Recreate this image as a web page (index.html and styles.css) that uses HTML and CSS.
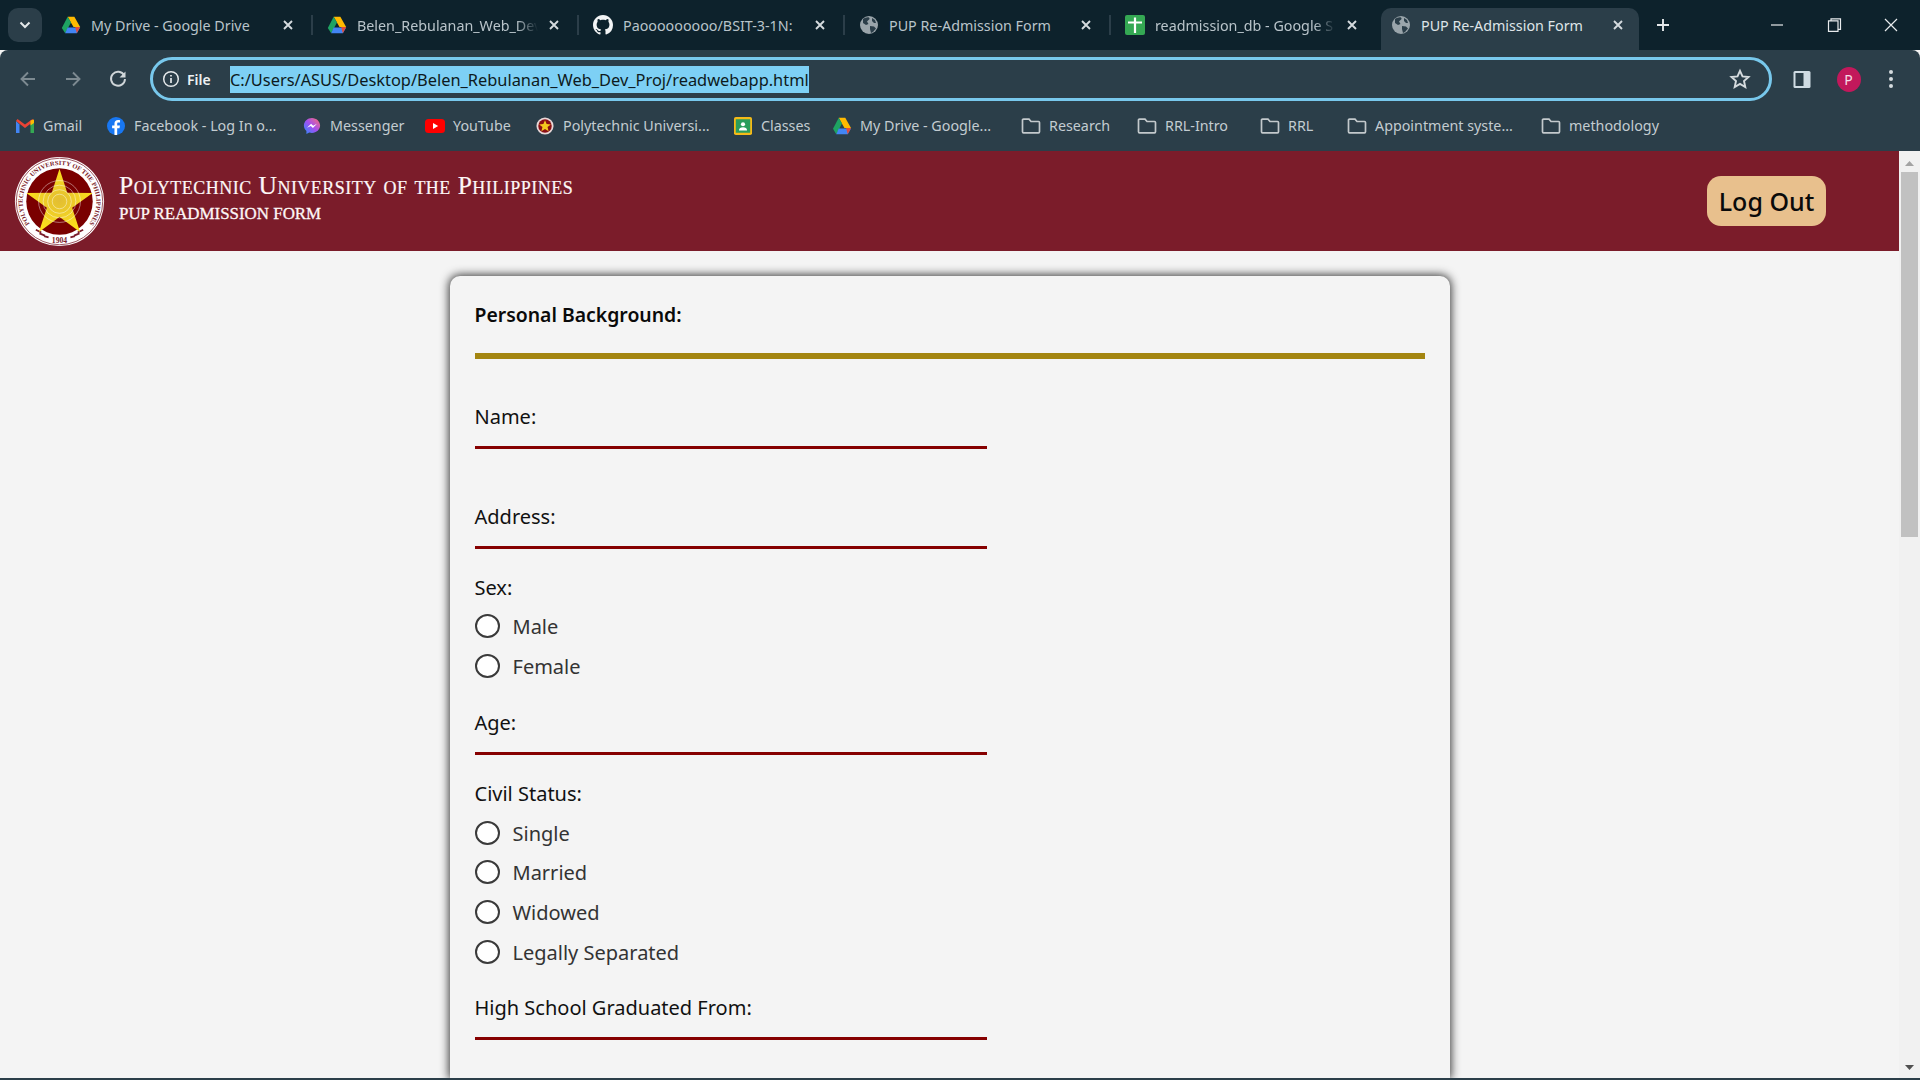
FILE: index.html
```html
<!DOCTYPE html>
<html lang="en">
<head>
<meta charset="utf-8">
<title>PUP Re-Admission Form</title>
<link rel="stylesheet" href="styles.css">
</head>
<body>
<svg class="defs" width="0" height="0" aria-hidden="true">
  <defs>
    <symbol id="drive" viewBox="0 0 24 22">
      <path d="M8 1h8l7 12.500h-8z" fill="#ffba00"/>
      <path d="M1 14.500 8 1l4 7-7 13z" fill="#1ea362"/>
      <path d="M8 14h15l-4 7H5z" fill="#4285f4"/>
      <path d="M19 21l4-7.500h-6z" fill="#e14a3b"/>
    </symbol>
    <symbol id="globe" viewBox="0 0 20 20">
      <circle cx="10" cy="10" r="9" fill="#9aa5ab"/>
      <path d="M4 4c2-1 4-2 6-1.500 1 1 .5 2-.5 2.500L8 6.500 9.500 9 7 10 4 8zM11 11l4 .5 2 2-3 3.500-2 1-1-4zM13 3l3 2 1 3-2 0-2-2z" fill="#2b3e49"/>
    </symbol>
    <symbol id="folder" viewBox="0 0 20 18">
      <path d="M1.500 3.200c0-.6.4-1 1-1h5.500l2 2.300h7.500c.6 0 1 .4 1 1v9.300c0 .6-.4 1-1 1h-15c-.6 0-1-.4-1-1z" fill="none" stroke="#c3c9cc" stroke-width="1.700"/>
    </symbol>
    <symbol id="x" viewBox="0 0 12 12">
      <path d="M2 2l8 8M10 2l-8 8" stroke="#d5dbde" stroke-width="1.900" fill="none"/>
    </symbol>
  </defs>
</svg>

<div class="tabstrip">
  <div class="tabsearch"><svg width="12" height="8" viewBox="0 0 12 8"><path d="M1.500 1.500 6 6l4.500-4.500" fill="none" stroke="#e4e8ea" stroke-width="2"/></svg></div>
  <div class="tab"><svg class="favicon"><use href="#drive"/></svg><span class="tabtitle">My Drive - Google Drive</span><svg class="tabx"><use href="#x"/></svg></div>
  <div class="tab"><svg class="favicon"><use href="#drive"/></svg><span class="tabtitle fade">Belen_Rebulanan_Web_Dev</span><svg class="tabx"><use href="#x"/></svg></div>
  <div class="tab"><svg class="favicon" viewBox="0 0 16 16"><path fill="#f2f4f5" d="M8 0C3.580 0 0 3.580 0 8c0 3.540 2.290 6.530 5.470 7.590.4.070.55-.17.55-.38 0-.19-.01-.82-.01-1.490-2.010.37-2.530-.49-2.690-.94-.09-.23-.48-.94-.82-1.130-.28-.15-.68-.52-.01-.53.63-.01 1.080.58 1.230.82.720 1.210 1.870.87 2.330.66.070-.52.280-.87.510-1.070-1.780-.2-3.640-.89-3.640-3.950 0-.87.310-1.590.820-2.150-.08-.2-.36-1.020.08-2.120 0 0 .67-.21 2.200.820.640-.18 1.320-.27 2-.27s1.360.090 2 .27c1.530-1.040 2.200-.82 2.200-.82.440 1.100.160 1.920.080 2.120.510.560.820 1.270.820 2.150 0 3.070-1.870 3.750-3.650 3.950.290.250.540.730.540 1.480 0 1.070-.01 1.930-.01 2.200 0 .21.150.46.550.38A8.010 8.010 0 0 0 16 8c0-4.420-3.580-8-8-8z"/></svg><span class="tabtitle">Paooooooooo/BSIT-3-1N:</span><svg class="tabx"><use href="#x"/></svg></div>
  <div class="tab"><svg class="favicon"><use href="#globe"/></svg><span class="tabtitle">PUP Re-Admission Form</span><svg class="tabx"><use href="#x"/></svg></div>
  <div class="tab"><svg class="favicon" viewBox="0 0 20 20"><rect width="20" height="20" rx="2" fill="#34a853"/><path d="M3 7.500h14M10 2.500v15.500" stroke="#fff" stroke-width="2.200"/></svg><span class="tabtitle fade">readmission_db - Google S</span><svg class="tabx"><use href="#x"/></svg></div>
  <div class="tab tab-active"><svg class="favicon"><use href="#globe"/></svg><span class="tabtitle">PUP Re-Admission Form</span><svg class="tabx"><use href="#x"/></svg></div>
  <svg class="newtab" width="14" height="14" viewBox="0 0 14 14"><path d="M7 1v12M1 7h12" stroke="#e4e8ea" stroke-width="1.900"/></svg>
  <div class="winctl">
    <svg class="winbtn" viewBox="0 0 56 20"><path d="M22 10h12" stroke="#e8ebed" stroke-width="1.200"/></svg>
    <svg class="winbtn" viewBox="0 0 56 20"><path d="M25 5.500V3.800h9.500v10.500h-2M22.500 5.800h9.500v10.500h-9.500z" fill="none" stroke="#e8ebed" stroke-width="1.200"/></svg>
    <svg class="winbtn" viewBox="0 0 56 20"><path d="M22 4l12 12M34 4 22 16" stroke="#e8ebed" stroke-width="1.200"/></svg>
  </div>
</div>

<div class="toolbar">
  <div class="navrow">
    <div class="navbtn"><svg width="20" height="20" viewBox="0 0 20 20"><path d="M17 10H4M10 3.500 3.500 10l6.500 6.500" fill="none" stroke="#7d8a91" stroke-width="1.900"/></svg></div>
    <div class="navbtn"><svg width="20" height="20" viewBox="0 0 20 20"><path d="M3 10h13M10 3.500l6.500 6.500-6.500 6.500" fill="none" stroke="#7d8a91" stroke-width="1.900"/></svg></div>
    <div class="navbtn"><svg width="20" height="20" viewBox="0 0 20 20"><path d="M16.200 6.500A7 7 0 1 0 17 10" fill="none" stroke="#d0d6d9" stroke-width="1.900"/><path d="M17.500 2.500v6h-6z" fill="#d0d6d9"/></svg></div>
    <div class="omnibox">
      <svg class="infoicon" width="18" height="18" viewBox="0 0 18 18"><circle cx="9" cy="9" r="7.300" fill="none" stroke="#e4e8ea" stroke-width="1.500"/><path d="M9 8v5M9 5v1.600" stroke="#e4e8ea" stroke-width="1.700"/></svg>
      <span class="filelabel">File</span>
      <span class="urltext">C:/Users/ASUS/Desktop/Belen_Rebulanan_Web_Dev_Proj/readwebapp.html</span>
      <svg class="star" width="22" height="22" viewBox="0 0 22 22"><path d="m11 2.800 2.500 5.600 6 .6-4.500 4 1.300 6L11 15.900 5.700 19l1.300-6-4.500-4 6-.6z" fill="none" stroke="#d5dbde" stroke-width="1.900"/></svg>
    </div>
    <div class="rightbtns">
      <svg width="20" height="20" viewBox="0 0 20 20"><rect x="1.500" y="2" width="17" height="17" rx="1.500" fill="#cfdbe3"/><rect x="3.500" y="4" width="8" height="13" fill="#2b3e49"/></svg>
      <span class="avatar">P</span>
      <svg width="6" height="22" viewBox="0 0 6 22"><circle cx="3" cy="4" r="2" fill="#d5dbde"/><circle cx="3" cy="11" r="2" fill="#d5dbde"/><circle cx="3" cy="18" r="2" fill="#d5dbde"/></svg>
    </div>
  </div>
  <div class="bookmarks">
    <div class="bm"><svg class="bmicon" viewBox="0 0 20 16"><path d="M1 3v12h3.500V6.500z" fill="#4285f4"/><path d="M19 3v12h-3.500V6.500z" fill="#34a853"/><path d="M1 3l9 7 9-7-1.500-2L10 6.500 2.500 1z" fill="#ea4335"/><path d="M15.500 2.500 19 1.500V5l-3.500 2.500z" fill="#fbbc04"/></svg><span>Gmail</span></div>
    <div class="bm"><svg class="bmicon" viewBox="0 0 20 20"><circle cx="10" cy="10" r="10" fill="#1877f2"/><path d="M11.300 20v-7.500h2.600l.5-3h-3.100V7.700c0-.9.400-1.500 1.600-1.500h1.600V3.600c-.5-.1-1.400-.2-2.200-.2-2.500 0-4 1.400-4 4v2.100H5.700v3h2.600V20z" fill="#fff"/></svg><span>Facebook - Log In o...</span></div>
    <div class="bm"><svg class="bmicon" viewBox="0 0 20 20"><defs><linearGradient id="msg" x1="0" y1="1" x2="1" y2="0"><stop offset="0" stop-color="#2a8cff"/><stop offset=".5" stop-color="#a34ff0"/><stop offset="1" stop-color="#ff6f6f"/></linearGradient></defs><path d="M10 1C5 1 1 4.700 1 9.500c0 2.500 1 4.600 2.800 6V19l3.200-1.700c1 .3 2 .4 3 .4 5 0 9-3.700 9-8.200S15 1 10 1z" fill="url(#msg)"/><path d="M4.500 12 9 7.500l2.300 2.200 4.200-2.200-4.500 4.700-2.300-2.300z" fill="#fff"/></svg><span>Messenger</span></div>
    <div class="bm"><svg class="bmicon" viewBox="0 0 20 14"><rect width="20" height="14" rx="3.500" fill="#f00"/><path d="m8 4 5.200 3L8 10z" fill="#fff"/></svg><span>YouTube</span></div>
    <div class="bm"><svg class="bmicon" viewBox="0 0 20 20"><circle cx="10" cy="10" r="9.500" fill="#e9d8d8"/><circle cx="10" cy="10" r="7.500" fill="#8a0f14"/><path d="m10 3.500 1.800 4.400 4.700.3-3.700 3 1.200 4.600L10 13.300l-4 2.500 1.200-4.600-3.700-3 4.700-.3z" fill="#f4c91e"/></svg><span>Polytechnic Universi...</span></div>
    <div class="bm"><svg class="bmicon" viewBox="0 0 20 20"><rect width="20" height="20" rx="2" fill="#f6bb18"/><rect x="2" y="2.500" width="16" height="15" fill="#2a9d5c"/><circle cx="10" cy="8" r="2.300" fill="#fff"/><path d="M5.500 15c0-2.500 2-3.700 4.500-3.700s4.500 1.200 4.500 3.700z" fill="#fff"/></svg><span>Classes</span></div>
    <div class="bm"><svg class="bmicon"><use href="#drive"/></svg><span>My Drive - Google...</span></div>
    <div class="bm"><svg class="bmicon"><use href="#folder"/></svg><span>Research</span></div>
    <div class="bm"><svg class="bmicon"><use href="#folder"/></svg><span>RRL-Intro</span></div>
    <div class="bm"><svg class="bmicon"><use href="#folder"/></svg><span>RRL</span></div>
    <div class="bm"><svg class="bmicon"><use href="#folder"/></svg><span>Appointment syste...</span></div>
    <div class="bm"><svg class="bmicon"><use href="#folder"/></svg><span>methodology</span></div>
  </div>
</div>

<div class="viewport">
  <div class="page">
    <header class="sitehead">
      <svg class="seal" viewBox="0 0 100 100">
        <defs>
          <path id="sealarc" d="M18.500 76A40.500 40.500 0 1 1 81.500 76"/>
          <radialGradient id="starfill" cx=".5" cy=".5" r=".5"><stop offset="0" stop-color="#e2bd33"/><stop offset="1" stop-color="#fde01a"/></radialGradient>
        </defs>
        <circle cx="50" cy="50" r="49" fill="#fff"/>
        <circle cx="50" cy="50" r="47.500" fill="none" stroke="#7b1c2a" stroke-width=".8"/>
        <circle cx="50" cy="50" r="36.500" fill="#7a0000"/>
        <text class="sealtext"><textPath href="#sealarc" startOffset="50%" text-anchor="middle" textLength="178" lengthAdjust="spacingAndGlyphs">POLYTECHNIC UNIVERSITY OF THE PHILIPPINES</textPath></text>
        <text class="sealyear" x="50" y="96" text-anchor="middle">1904</text>
        <path d="M24 81l6 3M28 85l6 2.500M33 88l5 1.500M76 81l-6 3M72 85l-6 2.500M67 88l-5 1.500" stroke="#7b1c2a" stroke-width="2"/>
        <path d="m50 14 8.500 26.500 28 .1-22.600 16.300 8.700 26.600L50 67 27.400 83.500l8.700-26.600L13.500 40.600l28-.1z" fill="url(#starfill)"/>
        <g fill="none" stroke="#fff" stroke-opacity=".6" stroke-width=".8"><circle cx="50" cy="50" r="23"/><circle cx="50" cy="50" r="18"/><circle cx="50" cy="50" r="13"/><circle cx="50" cy="50" r="8"/></g>
      </svg>
      <div class="headtext">
        <div class="uni">Polytechnic University of the Philippines</div>
        <div class="formname">PUP READMISSION FORM</div>
      </div>
      <button class="logout" type="button">Log Out</button>
    </header>
    <main class="card">
      <h2 class="section">Personal Background:</h2>
      <hr class="goldrule">
      <div class="field field-first"><div class="lbl">Name:</div><div class="line"></div></div>
      <div class="field"><div class="lbl">Address:</div><div class="line"></div></div>
      <div class="group">
        <div class="lbl lbl-group">Sex:</div>
        <div class="radio"><span class="dot"></span><span>Male</span></div>
        <div class="radio"><span class="dot"></span><span>Female</span></div>
      </div>
      <div class="field"><div class="lbl">Age:</div><div class="line"></div></div>
      <div class="group group-last">
        <div class="lbl lbl-group">Civil Status:</div>
        <div class="radio"><span class="dot"></span><span>Single</span></div>
        <div class="radio"><span class="dot"></span><span>Married</span></div>
        <div class="radio"><span class="dot"></span><span>Widowed</span></div>
        <div class="radio"><span class="dot"></span><span>Legally Separated</span></div>
      </div>
      <div class="field"><div class="lbl">High School Graduated From:</div><div class="line"></div></div>
    </main>
  </div>
  <div class="scrollbar">
    <svg class="arrow" width="9" height="5" viewBox="0 0 9 5"><path d="M4.500 0 9 5H0z" fill="#a3a3a3"/></svg>
    <div class="thumb"></div>
    <svg class="arrow arrow-down" width="9" height="5" viewBox="0 0 9 5"><path d="M0 0h9L4.500 5z" fill="#505050"/></svg>
  </div>
</div>
<div class="bottomstrip"></div>
</body>
</html>
```

FILE: styles.css
```css
* { box-sizing: border-box; }
html, body { margin: 0; height: 100%; }
body {
  width: 1920px;
  height: 1080px;
  overflow: hidden;
  display: flex;
  flex-direction: column;
  background: #f4f4f4;
  font-family: "Noto Sans", sans-serif;
  color: #111;
}
.defs { position: absolute; }

/* tab strip */
.tabstrip {
  height: 50px;
  flex: none;
  display: flex;
  align-items: flex-end;
  padding-left: 8px;
  background: #0d222c;
  color: #b9c4ca;
  font-size: 14.300px;
}
.tabsearch {
  width: 34px;
  height: 34px;
  margin: 0 3px 8px 0;
  border-radius: 10px;
  background: #2b3e49;
  display: flex;
  align-items: center;
  justify-content: center;
}
.tab {
  position: relative;
  width: 266px;
  height: 42px;
  padding: 0 15px 8px 16px;
  display: flex;
  align-items: center;
  gap: 10px;
}
.tab::after {
  content: "";
  position: absolute;
  right: -2px;
  top: 7px;
  height: 20px;
  border-right: 2px solid #2b3e49;
}
.tab:nth-child(6)::after, .tab-active::after { display: none; }
.tab-active { color: #dfe5e8; }
.tab-active::before {
  content: "";
  position: absolute;
  inset: 0 2px 0 6px;
  border-radius: 10px 10px 0 0;
  background: #2b3e49;
  z-index: 0;
  box-shadow: 0 8px 0 #2b3e49;
}
.tab-active > * { position: relative; z-index: 1; }
.favicon { width: 20px; height: 20px; flex: none; }
.tabtitle { flex: 1; min-width: 0; white-space: nowrap; overflow: hidden; }
.fade { overflow: visible; -webkit-mask-image: linear-gradient(90deg, #000 88%, transparent); mask-image: linear-gradient(90deg, #000 88%, transparent); }
.tabx { width: 12px; height: 12px; flex: none; margin-right: 2px; }
.newtab { margin: 0 0 18px 15px; }
.winctl { margin: 0 0 15px auto; display: flex; gap: 1px; padding-right: 1px; }
.winbtn { width: 56px; height: 20px; }

/* toolbar */
.toolbar {
  height: 101px;
  flex: none;
  background: #2b3e49;
  border-radius: 8px 8px 0 0;
  color: #c3ccd1;
}
.navrow { height: 58px; padding-top: 7px; display: flex; align-items: flex-start; padding-left: 5px; }
.navbtn { width: 45px; height: 44px; display: flex; align-items: center; justify-content: center; }
.omnibox {
  margin-left: 10px;
  flex: 1;
  height: 44px;
  border: 3px solid #78c8ec;
  border-radius: 22px;
  display: flex;
  align-items: center;
  padding-left: 9px;
  position: relative;
}
.infoicon { flex: none; }
.filelabel { width: 43px; margin-left: 7px; font-size: 14px; font-weight: 600; color: #eef1f3; }
.urltext {
  background: #7dd0f5;
  color: #0d1a20;
  font-size: 16.400px;
  line-height: 27px;
  white-space: nowrap;
}
.star { position: absolute; right: 18px; top: 8px; }
.rightbtns {
  width: 148px;
  height: 44px;
  flex: none;
  display: grid;
  grid-template-columns: 60px 33px 52px;
  justify-items: center;
  align-items: center;
}
.avatar {
  width: 24px;
  height: 25px;
  border-radius: 50%;
  background: #c2185b;
  color: #f6dce6;
  font-size: 14px;
  display: flex;
  align-items: center;
  justify-content: center;
}

/* bookmarks */
.bookmarks {
  height: 43px;
  padding: 0 0 8px 15px;
  display: grid;
  grid-template-columns: 91px 196px 123px 110px 198px 99px 189px 116px 123px 87px 194px 150px;
  align-items: center;
  font-size: 14.300px;
}
.bm { display: flex; align-items: center; gap: 8px; white-space: nowrap; }
.bmicon { width: 20px; height: 18px; flex: none; }

/* page */
.viewport { flex: 1; min-height: 0; display: flex; overflow: hidden; }
.page { flex: 1; min-width: 0; display: flex; flex-direction: column; }
.sitehead {
  height: 100px;
  flex: none;
  background: #7b1c2a;
  display: flex;
  align-items: center;
  padding: 0 73px 0 14px;
}
.seal { width: 91px; height: 91px; flex: none; }
.sealtext { font: 700 7px "Liberation Serif", serif; fill: #7b1c2a; }
.sealyear { font: 700 8.500px "Liberation Serif", serif; fill: #7b1c2a; }
.headtext {
  margin-left: 14px;
  margin-top: -5px;
  font-family: "Liberation Serif", serif;
  color: #fdf6f6;
}
.uni { font-size: 25.500px; font-variant: small-caps; line-height: 28px; letter-spacing: .48px; -webkit-text-stroke: .2px #fdf6f6; }
.formname { font-size: 16.900px; line-height: 24px; margin-top: 2px; -webkit-text-stroke: .3px #fdf6f6; }
.logout {
  margin-left: auto;
  width: 119px;
  height: 50px;
  padding: 0;
  border: 0;
  border-radius: 14px;
  background: #e8c08d;
  color: #0a0a0a;
  font: 500 25px "Noto Sans", sans-serif;
}
.card {
  width: 1000px;
  flex: 1;
  min-height: 0;
  margin: 25px auto 0;
  padding: 25px 25px 0;
  border-radius: 10px 10px 0 0;
  background: #f4f4f4;
  box-shadow: 0 0 10px 1px rgba(0, 0, 0, .8);
}
.section { margin: 0; font-size: 19.400px; line-height: 28px; font-weight: 600; color: #0a0a0a; }
.goldrule { margin: 24px 0 44px; height: 6px; border: 0; background: #a38510; }
.lbl { font-size: 20px; line-height: 28px; color: #111; }
.line { width: 512px; height: 3px; margin-top: 15px; background: #860000; }
.field { margin-bottom: 25px; }
.field-first { margin-bottom: 54px; }
.group { margin-bottom: 23px; }
.group-last { margin-bottom: 22px; }
.lbl-group { margin-bottom: 5px; }
.radio { height: 39.670px; display: flex; align-items: center; gap: 13px; font-size: 20px; color: #333; }
.dot { width: 25px; height: 24px; flex: none; margin-top: -1px; border-radius: 50%; border: 2px solid #3a3a3a; background: #fff; }

/* scrollbar */
.scrollbar {
  width: 21px;
  flex: none;
  background: #f1f1f1;
  display: flex;
  flex-direction: column;
  align-items: center;
  padding-top: 10px;
  position: relative;
}
.arrow { flex: none; }
.thumb { width: 17px; height: 365px; margin-top: 6px; background: #c1c1c1; }
.arrow-down { position: absolute; bottom: 8px; left: 6px; }
.bottomstrip { height: 2px; flex: none; background: #2b3e49; }
```
